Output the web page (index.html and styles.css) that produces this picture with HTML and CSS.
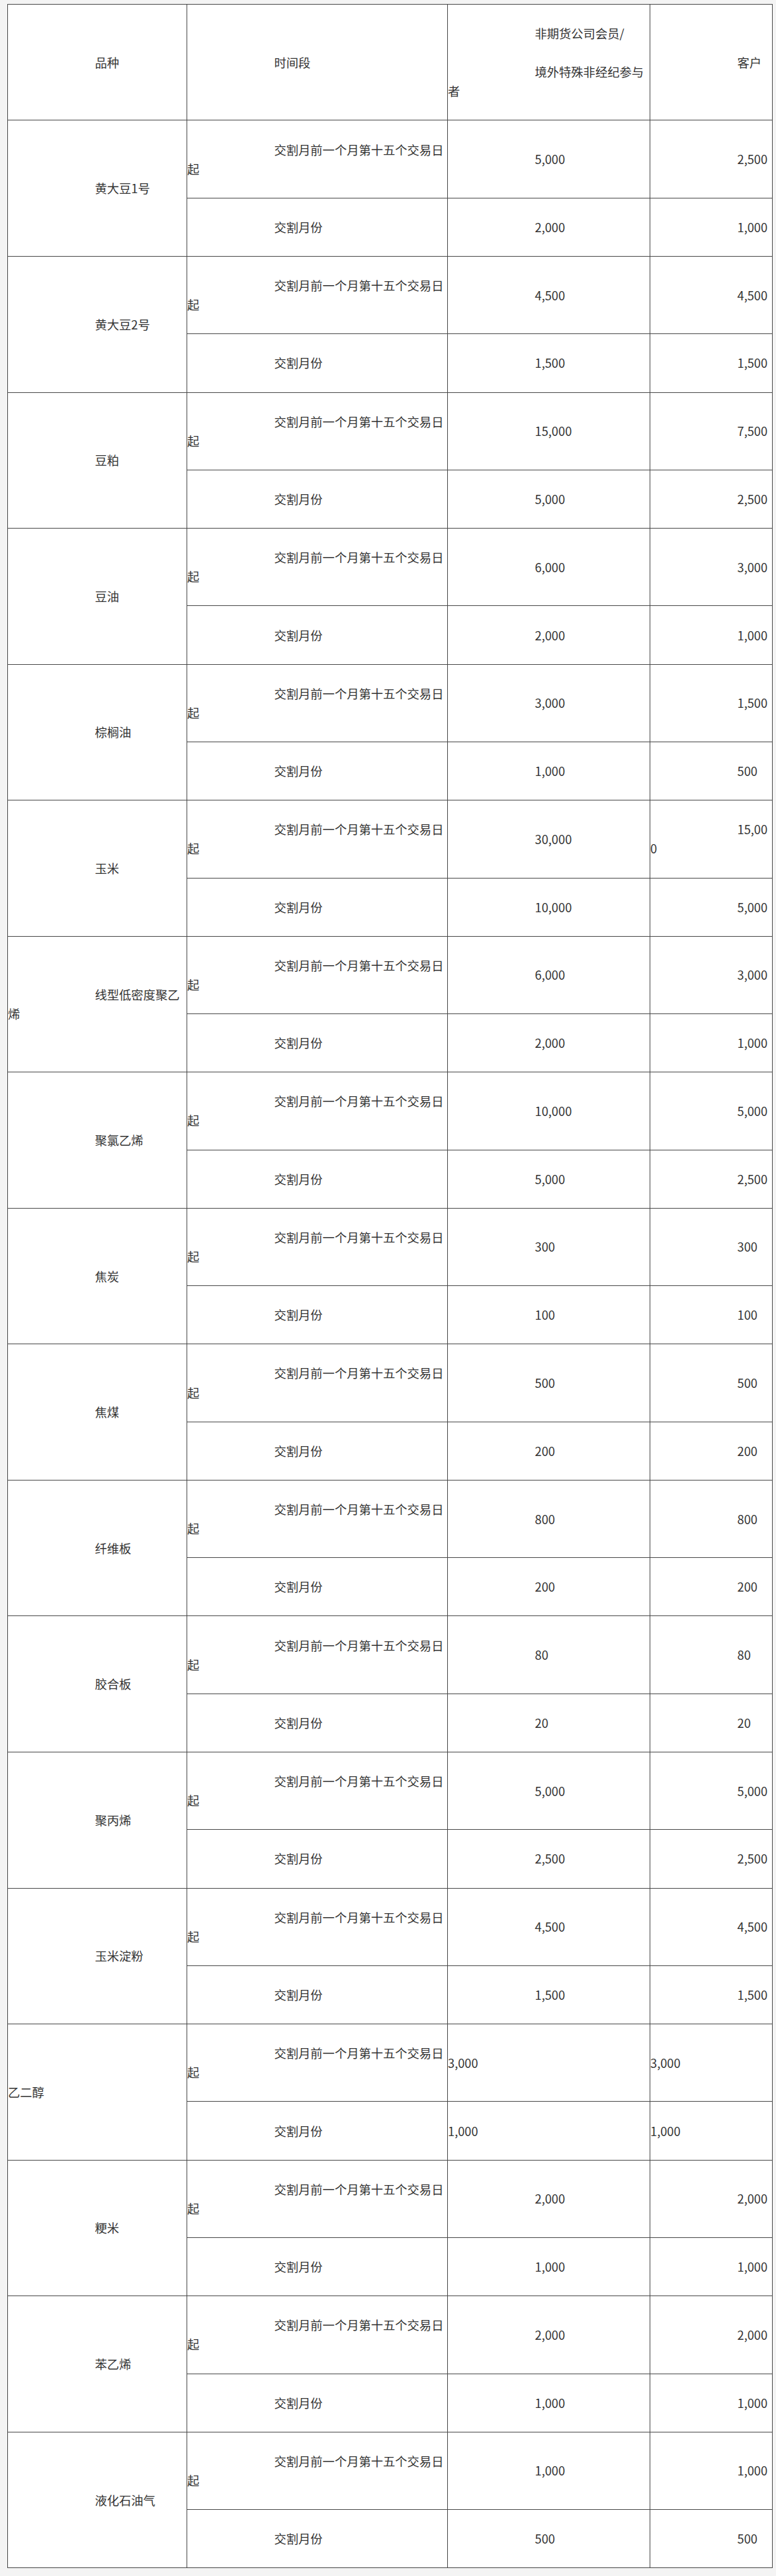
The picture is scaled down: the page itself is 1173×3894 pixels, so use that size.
FILE: index.html
```html
<!DOCTYPE html>
<html lang="zh-CN">
<head>
<meta charset="utf-8">
<title>持仓限额</title>
<link rel="stylesheet" href="styles.css">
</head>
<body>
<div class="wrap">
<table class="limits">
<colgroup>
<col class="w1"><col class="w2"><col class="w3"><col class="w4">
</colgroup>
<thead>
<tr>
<td><p>品种</p></td>
<td><p>时间段</p></td>
<td><p>非期货公司会员/</p><p>境外特殊非经纪参与者</p></td>
<td><p>客户</p></td>
</tr>
</thead>
<tbody>
<tr><td rowspan="2"><p>黄大豆1号</p></td><td><p>交割月前一个月第十五个交易日起</p></td><td><p>5,000</p></td><td><p>2,500</p></td></tr>
<tr><td><p>交割月份</p></td><td><p>2,000</p></td><td><p>1,000</p></td></tr>

<tr><td rowspan="2"><p>黄大豆2号</p></td><td><p>交割月前一个月第十五个交易日起</p></td><td><p>4,500</p></td><td><p>4,500</p></td></tr>
<tr><td><p>交割月份</p></td><td><p>1,500</p></td><td><p>1,500</p></td></tr>

<tr><td rowspan="2"><p>豆粕</p></td><td><p>交割月前一个月第十五个交易日起</p></td><td><p>15,000</p></td><td><p>7,500</p></td></tr>
<tr><td><p>交割月份</p></td><td><p>5,000</p></td><td><p>2,500</p></td></tr>

<tr><td rowspan="2"><p>豆油</p></td><td><p>交割月前一个月第十五个交易日起</p></td><td><p>6,000</p></td><td><p>3,000</p></td></tr>
<tr><td><p>交割月份</p></td><td><p>2,000</p></td><td><p>1,000</p></td></tr>

<tr><td rowspan="2"><p>棕榈油</p></td><td><p>交割月前一个月第十五个交易日起</p></td><td><p>3,000</p></td><td><p>1,500</p></td></tr>
<tr><td><p>交割月份</p></td><td><p>1,000</p></td><td><p>500</p></td></tr>

<tr><td rowspan="2"><p>玉米</p></td><td><p>交割月前一个月第十五个交易日起</p></td><td><p>30,000</p></td><td><p>15,000</p></td></tr>
<tr><td><p>交割月份</p></td><td><p>10,000</p></td><td><p>5,000</p></td></tr>

<tr><td rowspan="2"><p>线型低密度聚乙烯</p></td><td><p>交割月前一个月第十五个交易日起</p></td><td><p>6,000</p></td><td><p>3,000</p></td></tr>
<tr><td><p>交割月份</p></td><td><p>2,000</p></td><td><p>1,000</p></td></tr>

<tr><td rowspan="2"><p>聚氯乙烯</p></td><td><p>交割月前一个月第十五个交易日起</p></td><td><p>10,000</p></td><td><p>5,000</p></td></tr>
<tr><td><p>交割月份</p></td><td><p>5,000</p></td><td><p>2,500</p></td></tr>

<tr><td rowspan="2"><p>焦炭</p></td><td><p>交割月前一个月第十五个交易日起</p></td><td><p>300</p></td><td><p>300</p></td></tr>
<tr><td><p>交割月份</p></td><td><p>100</p></td><td><p>100</p></td></tr>

<tr><td rowspan="2"><p>焦煤</p></td><td><p>交割月前一个月第十五个交易日起</p></td><td><p>500</p></td><td><p>500</p></td></tr>
<tr><td><p>交割月份</p></td><td><p>200</p></td><td><p>200</p></td></tr>

<tr><td rowspan="2"><p>纤维板</p></td><td><p>交割月前一个月第十五个交易日起</p></td><td><p>800</p></td><td><p>800</p></td></tr>
<tr><td><p>交割月份</p></td><td><p>200</p></td><td><p>200</p></td></tr>

<tr><td rowspan="2"><p>胶合板</p></td><td><p>交割月前一个月第十五个交易日起</p></td><td><p>80</p></td><td><p>80</p></td></tr>
<tr><td><p>交割月份</p></td><td><p>20</p></td><td><p>20</p></td></tr>

<tr><td rowspan="2"><p>聚丙烯</p></td><td><p>交割月前一个月第十五个交易日起</p></td><td><p>5,000</p></td><td><p>5,000</p></td></tr>
<tr><td><p>交割月份</p></td><td><p>2,500</p></td><td><p>2,500</p></td></tr>

<tr><td rowspan="2"><p>玉米淀粉</p></td><td><p>交割月前一个月第十五个交易日起</p></td><td><p>4,500</p></td><td><p>4,500</p></td></tr>
<tr><td><p>交割月份</p></td><td><p>1,500</p></td><td><p>1,500</p></td></tr>

<tr><td rowspan="2"><p class="flush">乙二醇</p></td><td><p>交割月前一个月第十五个交易日起</p></td><td><p class="flush">3,000</p></td><td><p class="flush">3,000</p></td></tr>
<tr><td><p>交割月份</p></td><td><p class="flush">1,000</p></td><td><p class="flush">1,000</p></td></tr>

<tr><td rowspan="2"><p>粳米</p></td><td><p>交割月前一个月第十五个交易日起</p></td><td><p>2,000</p></td><td><p>2,000</p></td></tr>
<tr><td><p>交割月份</p></td><td><p>1,000</p></td><td><p>1,000</p></td></tr>

<tr><td rowspan="2"><p>苯乙烯</p></td><td><p>交割月前一个月第十五个交易日起</p></td><td><p>2,000</p></td><td><p>2,000</p></td></tr>
<tr><td><p>交割月份</p></td><td><p>1,000</p></td><td><p>1,000</p></td></tr>

<tr><td rowspan="2"><p>液化石油气</p></td><td><p>交割月前一个月第十五个交易日起</p></td><td><p>1,000</p></td><td><p>1,000</p></td></tr>
<tr><td><p>交割月份</p></td><td><p>500</p></td><td><p>500</p></td></tr>
</tbody>
</table>
</div>
</body>
</html>
```

FILE: styles.css
```css
html, body {
  margin: 0;
  padding: 0;
  background: #f4f4f4;
}
.wrap {
  padding: 6px 6px 11px 11px;
}
.limits {
  width: 1156px;
  table-layout: fixed;
  border-collapse: collapse;
  background: #ffffff;
  font-family: "Noto Sans CJK SC", "Noto Sans", sans-serif;
  font-size: 18.3px;
  color: #333333;
}
.w1 { width: 271px; }
.w2 { width: 394px; }
.w3 { width: 306px; }
.w4 { width: 185px; }
.limits td {
  border: 1px solid #474747;
  padding: 0;
  vertical-align: middle;
  text-align: left;
}
.limits p {
  margin: 29.08px 0;
  line-height: 29.08px;
  text-indent: 131.5px;
  word-break: break-all;
}
.limits p.flush {
  text-indent: 0;
}
```
